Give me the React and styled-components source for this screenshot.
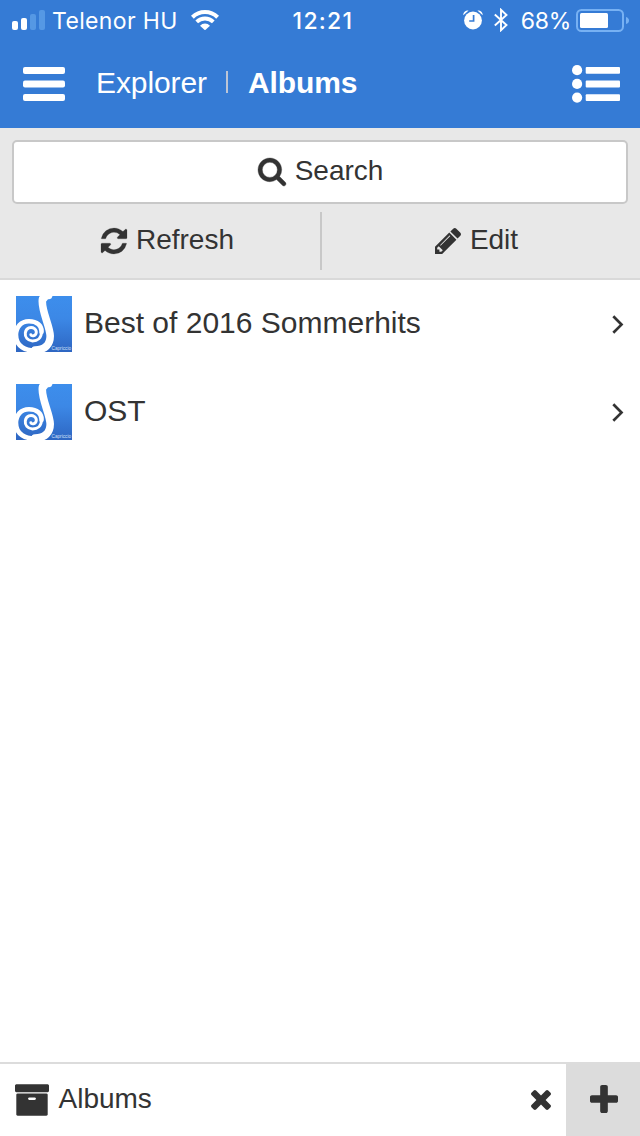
import React from "react";
import styled, { createGlobalStyle } from "styled-components";

const albums = ["Best of 2016 Sommerhits", "OST"];

const App = () => {
  return (
    <Screen>
      <GlobalStyle />
      <StatusBar>
        <CarrierDiv>
          <SignalIcon />
          <Carrier>Telenor HU</Carrier>
          <WifiIcon />
        </CarrierDiv>
        <Clock>12:21</Clock>
        <IndicatorsDiv>
          <AlarmIcon />
          <BluetoothIcon />
          <Percent>68%</Percent>
          <BatteryIcon />
        </IndicatorsDiv>
      </StatusBar>
      <NavBar>
        <MenuIcon />
        <Crumb>Explorer</Crumb>
        <CrumbDivider />
        <Crumb $active>Albums</Crumb>
        <ListIcon />
      </NavBar>
      <Toolbar>
        <SearchButton>
          <Icon name="search" size={28} />
          Search
        </SearchButton>
        <Actions>
          <ActionButton>
            <Icon name="refresh" size={26} />
            Refresh
          </ActionButton>
          <ActionButton $divided>
            <Icon name="pencil" size={26} />
            Edit
          </ActionButton>
        </Actions>
      </Toolbar>
      <AlbumList>
        {albums.map((album) => (
          <AlbumRow key={album}>
            <Cover id={album.slice(0, 3)} />
            <AlbumName>{album}</AlbumName>
            <Chevron />
          </AlbumRow>
        ))}
      </AlbumList>
      <TabBar>
        <Tab>
          <Icon name="archive" size={34} height={32} />
          <TabName>Albums</TabName>
          <Icon name="times" size={20} />
        </Tab>
        <AddTab>
          <Icon name="plus" size={28} />
        </AddTab>
      </TabBar>
    </Screen>
  );
};

export default App;

const icons = {
  search: {
    box: "64 128 1664 1664",
    weight: 20,
    d: "M1216 832q0-185-131.5-316.5t-316.5-131.5-316.5 131.5-131.5 316.5 131.5 316.5 316.5 131.5 316.5-131.5 131.5-316.5zm512 832q0 52-38 90t-90 38q-54 0-90-38l-343-342q-179 124-399 124-143 0-273.5-55.5t-225-150-150-225-55.5-273.5 55.5-273.5 150-225 225-150 273.5-55.5 273.5 55.5 225 150 150 225 55.5 273.5q0 220-124 399l343 343q37 37 37 90z",
  },
  refresh: {
    box: "128 128 1536 1536",
    weight: 12,
    d: "M1639 1056q0 5-1 7-64 268-268 434.5t-478 166.5q-146 0-282.5-55t-243.5-157l-129 129q-19 19-45 19t-45-19-19-45v-448q0-26 19-45t45-19h448q26 0 45 19t19 45-19 45l-137 137q71 66 161 102t187 36q134 0 250-65t186-179q11-17 53-117 8-23 30-23h192q13 0 22.5 9.5t9.5 22.5zm25-800v448q0 26-19 45t-45 19h-448q-26 0-45-19t-19-45 19-45l138-138q-148-137-349-137-134 0-250 65t-186 179q-11 17-53 117-8 23-30 23h-199q-13 0-22.5-9.5t-9.5-22.5v-7q65-268 270-434.5t480-166.5q146 0 284 55.5t245 156.5l130-129q19-19 45-19t45 19 19 45z",
  },
  pencil: {
    box: "128 149 1515 1515",
    d: "M491 1536l91-91-235-235-91 91v107h128v128h107zm523-928q0-22-22-22-10 0-17 7l-542 542q-7 7-7 17 0 22 22 22 10 0 17-7l542-542q7-7 7-17zm-54-192l416 416-832 832h-416v-416zm683 96q0 53-37 90l-166 166-416-416 166-165q36-38 90-38 53 0 91 38l235 234q37 39 37 91z",
  },
  archive: {
    box: "64 128 1664 1536",
    d: "M1088 832q0-26-19-45t-45-19h-256q-26 0-45 19t-19 45 19 45 45 19h256q26 0 45-19t19-45zm576-192v960q0 26-19 45t-45 19h-1408q-26 0-45-19t-19-45v-960q0-26 19-45t45-19h1408q26 0 45 19t19 45zm64-448v256q0 26-19 45t-45 19h-1536q-26 0-45-19t-19-45v-256q0-26 19-45t45-19h1536q26 0 45 19t19 45z",
  },
  times: {
    box: "302 366 1188 1188",
    d: "M1490 1322q0 40-28 68l-136 136q-28 28-68 28t-68-28l-294-294-294 294q-28 28-68 28t-68-28l-136-136q-28-28-28-68t28-68l294-294-294-294q-28-28-28-68t28-68l136-136q28-28 68-28t68 28l294 294 294-294q28-28 68-28t68 28l136 136q28 28 28 68t-28 68l-294 294 294 294q28 28 28 68z",
  },
  plus: {
    box: "192 128 1408 1408",
    d: "M1600 736v192q0 40-28 68t-68 28h-416v416q0 40-28 68t-68 28h-192q-40 0-68-28t-28-68v-416h-416q-40 0-68-28t-28-68v-192q0-40 28-68t68-28h416v-416q0-40 28-68t68-28h192q40 0 68 28t28 68v416h416q40 0 68 28t28 68z",
  },
};

const Icon = ({ name, size, height }) => (
  <svg
    width={size}
    height={height || size}
    viewBox={icons[name].box}
    fill="currentColor"
    stroke="currentColor"
    strokeWidth={icons[name].weight || 0}
    overflow="visible"
  >
    <path d={icons[name].d} />
  </svg>
);

const SignalIcon = () => (
  <svg width="34" height="20" viewBox="0 0 34 20" fill="#fff">
    <rect x="0" y="11" width="6" height="9" rx="2" />
    <rect x="9" y="8" width="6" height="12" rx="2" />
    <rect x="18" y="4" width="6" height="16" rx="2" fill="#5598e4" />
    <rect x="27" y="0" width="6" height="20" rx="2" fill="#5598e4" />
  </svg>
);

const WifiIcon = () => (
  <svg width="28" height="20" viewBox="0 0 28 20" fill="none" stroke="#fff">
    <path d="M1.4 7.200a18 18 0 0 1 25.200 0" strokeWidth="4" />
    <path d="M5.7 11.9a11.8 11.8 0 0 1 16.6 0" strokeWidth="3.8" />
    <path d="M9 15.7a7 7 0 0 1 10 0L14 20.300z" fill="#fff" stroke="none" />
  </svg>
);

const AlarmIcon = () => (
  <svg width="20" height="20" viewBox="0 0 20 20" fill="#fff">
    <circle cx="10" cy="10.5" r="8.9" />
    <path d="M.3 5.2C.2 2.200 2.600 .200 5.600 .500zM19.700 5.200C19.800 2.200 17.400 .200 14.400 .500z" />
    <path d="M10.6 5v6H6.2" fill="none" stroke="#357bd5" strokeWidth="1.7" />
  </svg>
);

const BluetoothIcon = () => (
  <svg width="14" height="24" viewBox="0 0 14 24" fill="none" stroke="#fff">
    <path d="M.8 6.5L12.5 17 7 22.2V1.8L12.5 7 .8 17.5" strokeWidth="1.9" />
  </svg>
);

const BatteryIcon = () => (
  <svg width="53" height="23" viewBox="0 0 53 23">
    <rect
      x="1"
      y="1"
      width="46"
      height="21"
      rx="4.5"
      fill="none"
      stroke="#77b1f3"
      strokeWidth="2"
    />
    <rect x="4" y="4" width="28" height="15" rx="1.5" fill="#fff" />
    <path d="M50 8q3 1 3 3.5t-3 3.5z" fill="#77b1f3" />
  </svg>
);

const MenuIcon = () => (
  <svg width="42" height="34" viewBox="0 0 42 34" fill="#fff">
    <rect y="0" width="42" height="7" rx="2" />
    <rect y="13.5" width="42" height="7" rx="2" />
    <rect y="27" width="42" height="7" rx="2" />
  </svg>
);

const ListIcon = () => (
  <svg width="48" height="38" viewBox="0 0 48 38" fill="#fff">
    {[5.2, 18.9, 32.6].map((y) => (
      <g key={y}>
        <circle cx="5.1" cy={y} r="5.1" />
        <rect x="13.7" y={y - 3.3} width="34.3" height="6.8" rx="1" />
      </g>
    ))}
  </svg>
);

const Chevron = () => (
  <svg width="12" height="20" viewBox="0 0 12 20" fill="none" stroke="#333">
    <path d="M1.3 2.2L9.5 10.6l-8.2 8.2" strokeWidth="2.7" />
  </svg>
);

const Cover = ({ id }) => (
  <svg width="56" height="56" viewBox="0 0 56 56">
    <defs>
      <linearGradient id={id} x1="0" y1="0" x2="0" y2="1">
        <stop offset="0" stopColor="#3d8eec" />
        <stop offset="0.4" stopColor="#3c88e6" />
        <stop offset="1" stopColor="#2e66c2" />
      </linearGradient>
    </defs>
    <rect width="56" height="56" fill={`url(#${id})`} />
    <g fill="none" stroke="#fff" strokeLinecap="round">
      <path
        d="M26.5 3C24.5 13 34 30 34.2 40C34.2 48.5 29 54 19 54"
        strokeWidth="7.6"
      />
      <path
        d="M22 54.3C9 55.500 0 50 0 39C0 31 5 25.200 13 25.200C21 25.200 26 29.500 25.500 36"
        strokeWidth="4.6"
      />
      <path
        d="M25.5 36C25.5 42 21.5 45 16.5 45C11.5 44.8 8.8 41 9.3 37C10 31.8 15 30.200 18.500 32.600C21.300 34.800 20.800 39 17.300 39.800C15.800 40 14.800 39.300 14.800 38.600"
        strokeWidth="2.9"
      />
    </g>
    <path
      d="M23 4Q23 1 24.5 0H36.5L35.5 2.3Q34 3.5 32 3.3Q29.5 5 29.5 9z"
      fill="#fff"
    />
    <CoverText x="35.5" y="53.5">
      Capriccio
    </CoverText>
  </svg>
);

const GlobalStyle = createGlobalStyle`
  * {
    box-sizing: border-box;
  }

  body {
    margin: 0;
    background: #fff;
  }

  svg {
    display: block;
    flex: none;
  }

  button {
    border: 0;
    padding: 0;
    margin: 0;
    background: none;
    font: inherit;
    color: inherit;
  }
`;

const Screen = styled.div`
  display: flex;
  flex-direction: column;
  width: 640px;
  height: 1136px;
  background: #fff;
  color: #333;
  font-family: "Liberation Sans", Arial, sans-serif;
  font-size: 28px;
  line-height: 32px;
`;

const StatusBar = styled.div`
  display: grid;
  grid-template-columns: 1fr auto 1fr;
  align-items: center;
  height: 40px;
  padding: 0 11px 0 12px;
  background: #357bd5;
  color: #fff;
  font-family: Inter, sans-serif;
  font-size: 23px;
`;

const CarrierDiv = styled.div`
  display: flex;
  align-items: center;
`;

const Carrier = styled.span`
  margin: 2px 13px 0 6px;
  letter-spacing: 0.35px;
`;

const Clock = styled.span`
  margin: 2px 0 0 5px;
  font-weight: 500;
  letter-spacing: 1.3px;
`;

const IndicatorsDiv = styled.div`
  display: flex;
  align-items: center;
  justify-content: flex-end;

  svg:first-child {
    margin-right: 11px;
  }

  svg:last-child {
    margin-top: 1px;
  }
`;

const Percent = styled.span`
  margin: 2px 5px 0 13px;
  letter-spacing: -0.3px;
`;

const NavBar = styled.header`
  display: flex;
  align-items: center;
  height: 88px;
  padding: 0 20px 0 23px;
  background: #357bd5;
  color: #fff;
  font-size: 30px;

  svg:first-child {
    margin-right: 31px;
  }

  svg:last-child {
    margin-left: auto;
  }
`;

const Crumb = styled.span`
  margin-top: -3px;
  font-weight: ${(props) => (props.$active ? "bold" : "normal")};
  letter-spacing: -0.1px;
`;

const CrumbDivider = styled.span`
  width: 2px;
  height: 22px;
  margin: -4px 20px 0 19px;
  background: #bcc5d6;
`;

const Toolbar = styled.div`
  height: 152px;
  padding: 12px 12px 0;
  border-bottom: 2px solid #d9d9d9;
  background: #e8e8e8;
`;

const SearchButton = styled.button`
  display: flex;
  align-items: center;
  justify-content: center;
  gap: 9px;
  width: 100%;
  height: 64px;
  padding: 0 0 3px 1px;
  border: 2px solid #c8c8c8;
  border-radius: 5px;
  background: #fff;

  svg {
    margin-top: 3px;
  }
`;

const Actions = styled.div`
  display: grid;
  grid-template-columns: 1fr 1fr;
  height: 58px;
  margin-top: 8px;
`;

const ActionButton = styled.button`
  display: flex;
  align-items: center;
  justify-content: center;
  gap: 9px;
  padding: 0 0 3px 3px;
  border-left: ${(props) => (props.$divided ? "2px solid #c8c8c8" : "0")};

  svg {
    margin-top: 3px;
  }
`;

const AlbumList = styled.main`
  flex: 1;
`;

const AlbumRow = styled.div`
  display: flex;
  align-items: center;
  height: 88px;
  padding: 0 16px;
  font-size: 30px;
`;

const AlbumName = styled.span`
  flex: 1;
  margin: -3px 0 0 12px;
`;

const CoverText = styled.text`
  fill: #cfe0f7;
  font-family: "Liberation Sans", Arial, sans-serif;
  font-size: 4.7px;
`;

const TabBar = styled.footer`
  display: flex;
  height: 74px;
  border-top: 2px solid #dcdcdc;
`;

const Tab = styled.div`
  display: flex;
  flex: 1;
  align-items: center;
  padding: 0 15px;
`;

const TabName = styled.span`
  flex: 1;
  margin: -2px 0 0 9.5px;
`;

const AddTab = styled.button`
  display: flex;
  align-items: center;
  justify-content: center;
  width: 74px;
  padding: 0 0 3px 2px;
  background: #dcdcdc;
`;
